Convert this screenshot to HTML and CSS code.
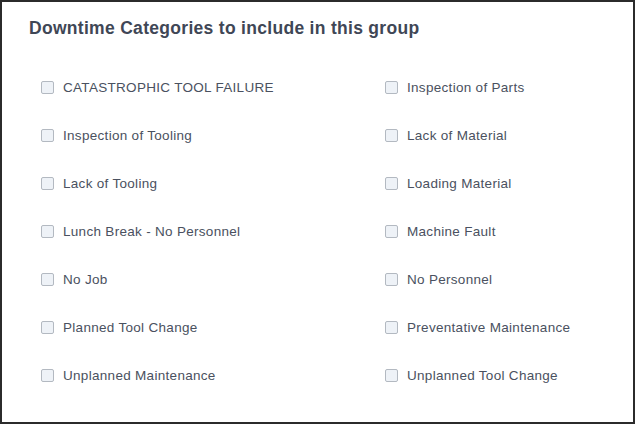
FILE: index.html
```html
<!DOCTYPE html>
<html>
<head>
<meta charset="utf-8">
<link rel="stylesheet" href="styles.css">
</head>
<body>
<div class="panel">
  <h2 class="title">Downtime Categories to include in this group</h2>
  <div class="grid">
    <label class="item"><span class="box"></span><span class="label">CATASTROPHIC TOOL FAILURE</span></label>
    <label class="item"><span class="box"></span><span class="label">Inspection of Parts</span></label>
    <label class="item"><span class="box"></span><span class="label">Inspection of Tooling</span></label>
    <label class="item"><span class="box"></span><span class="label">Lack of Material</span></label>
    <label class="item"><span class="box"></span><span class="label">Lack of Tooling</span></label>
    <label class="item"><span class="box"></span><span class="label">Loading Material</span></label>
    <label class="item"><span class="box"></span><span class="label">Lunch Break - No Personnel</span></label>
    <label class="item"><span class="box"></span><span class="label">Machine Fault</span></label>
    <label class="item"><span class="box"></span><span class="label">No Job</span></label>
    <label class="item"><span class="box"></span><span class="label">No Personnel</span></label>
    <label class="item"><span class="box"></span><span class="label">Planned Tool Change</span></label>
    <label class="item"><span class="box"></span><span class="label">Preventative Maintenance</span></label>
    <label class="item"><span class="box"></span><span class="label">Unplanned Maintenance</span></label>
    <label class="item"><span class="box"></span><span class="label">Unplanned Tool Change</span></label>
  </div>
</div>
</body>
</html>
```

FILE: styles.css
```css
html, body {
  margin: 0;
  padding: 0;
  background: #ffffff;
}
.panel {
  box-sizing: border-box;
  width: 635px;
  height: 424px;
  border: 2px solid #2b2b2b;
  padding: 16px 0 0 27px;
  font-family: "Liberation Sans", Arial, sans-serif;
  overflow: hidden;
}
.title {
  margin: 0;
  font-size: 17.5px;
  letter-spacing: 0.3px;
  line-height: 21px;
  font-weight: bold;
  color: #3f4756;
}
.grid {
  margin-top: 24px;
  padding-left: 12px;
  display: grid;
  grid-template-columns: 344px 1fr;
  grid-auto-rows: 48px;
}
.item {
  display: flex;
  align-items: center;
}
.box {
  box-sizing: border-box;
  width: 13px;
  height: 13px;
  border: 1px solid #b3b9c1;
  border-radius: 2px;
  background: #eef2f7;
  margin-right: 9px;
  flex: none;
}
.label {
  font-size: 13.5px;
  letter-spacing: 0.3px;
  color: #4a5160;
}
```
